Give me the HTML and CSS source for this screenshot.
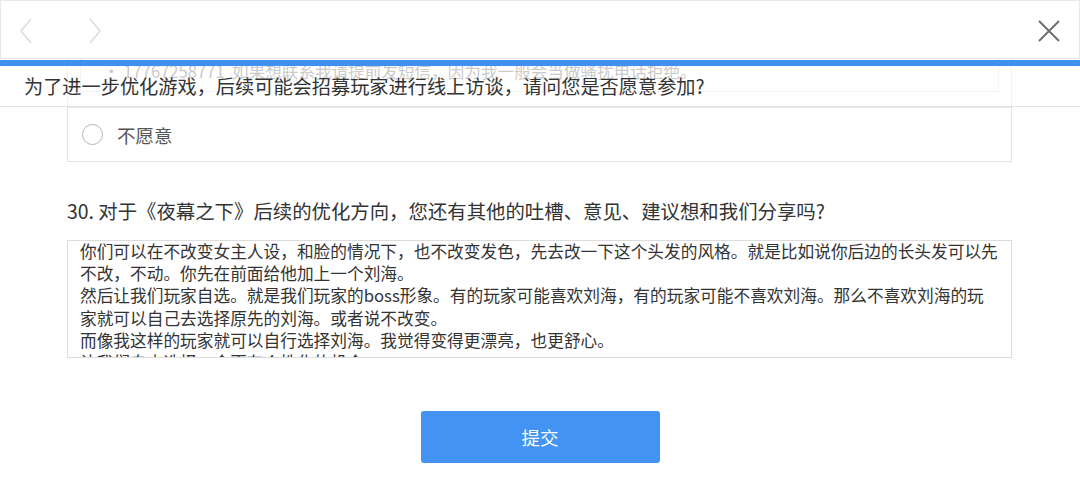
FILE: index.html
```html
<!DOCTYPE html>
<html lang="zh-CN">
<head>
<meta charset="utf-8">
<title>问卷</title>
<link rel="stylesheet" href="styles.css">
</head>
<body>
<main class="page">
  <section class="q-box">
    <div class="fill-area">
      <div class="fill-input">• 17767258771&nbsp;&nbsp;如果想联系我请提前发短信，因为我一般会当做骚扰电话拒绝。</div>
    </div>
    <label class="option">
      <span class="radio"></span>
      <span class="option-text">不愿意</span>
    </label>
  </section>

  <h2 class="q-title">30. 对于《夜幕之下》后续的优化方向，您还有其他的吐槽、意见、建议想和我们分享吗?</h2>
  <div class="answer">
    <div class="answer-text">
      <div class="line">你们可以在不改变女主人设，和脸的情况下，也不改变发色，先去改一下这个头发的风格。就是比如说你后边的长头发可以先</div>
      <div class="line">不改，不动。你先在前面给他加上一个刘海。</div>
      <div class="line">然后让我们玩家自选。就是我们玩家的boss形象。有的玩家可能喜欢刘海，有的玩家可能不喜欢刘海。那么不喜欢刘海的玩</div>
      <div class="line">家就可以自己去选择原先的刘海。或者说不改变。</div>
      <div class="line">而像我这样的玩家就可以自行选择刘海。我觉得变得更漂亮，也更舒心。</div>
      <div class="line">让我们自由选择，会更有个性化的机会。</div>
    </div>
  </div>
</main>
<div class="actions">
  <button class="submit" type="button">提交</button>
</div>

<header class="topbar">
  <svg class="nav-arrow back" width="16" height="28" viewBox="0 0 16 28"><path d="M13 2 L3 14 L13 26" fill="none" stroke="#dcdcdc" stroke-width="1.6"/></svg>
  <svg class="nav-arrow fwd" width="16" height="28" viewBox="0 0 16 28"><path d="M3 2 L13 14 L3 26" fill="none" stroke="#dcdcdc" stroke-width="1.6"/></svg>
  <svg class="close" width="24" height="24" viewBox="0 0 24 24"><path d="M2 2 L22 22 M22 2 L2 22" fill="none" stroke="#6a6a6a" stroke-width="1.8"/></svg>
</header>
<div class="progress"></div>
<div class="sticky-q">为了进一步优化游戏，后续可能会招募玩家进行线上访谈，请问您是否愿意参加?</div>
</body>
</html>
```

FILE: styles.css
```css
html, body {
  margin: 0;
  padding: 0;
  background: #ffffff;
}
body {
  width: 1080px;
  height: 486px;
  overflow: hidden;
  position: relative;
  font-family: "Noto Sans CJK SC", "Noto Sans", "Liberation Sans", sans-serif;
  color: #333333;
}
.page {
  padding-left: 67px;
  width: 945px;
}
.q-box {
  border: 1px solid #e3e3e3;
  border-top: none;
  box-sizing: border-box;
  width: 945px;
}
.fill-area {
  padding: 55px 12px 0 12px;
  height: 107px;
  box-sizing: border-box;
}
.fill-input {
  height: 37px;
  box-sizing: border-box;
  border: 1px solid #e3e3e3;
  padding-left: 22px;
  font-size: 16.6px;
  line-height: 30px;
  color: #7a7a7a;
  white-space: nowrap;
  overflow: hidden;
}
.option {
  display: flex;
  align-items: center;
  height: 54px;
  border-top: 1px solid #e6e6e6;
  padding-left: 14px;
  box-sizing: border-box;
}
.radio {
  width: 21px;
  height: 21px;
  border: 1.5px solid #b4b4b4;
  border-radius: 50%;
  box-sizing: border-box;
}
.option-text {
  margin-left: 14px;
  font-size: 18.5px;
  color: #555555;
  line-height: 24px;
}
.q-title {
  margin: 35px 0 0 0;
  font-size: 19.4px;
  font-weight: normal;
  line-height: 28px;
  color: #333333;
  white-space: nowrap;
}
.answer {
  margin-top: 15px;
  height: 118px;
  box-sizing: border-box;
  border: 1px solid #dcdcdc;
  padding: 0 12px;
  overflow: hidden;
}
.answer-text {
  margin-top: -1px;
}
.line {
  font-size: 16.7px;
  line-height: 22.2px;
  white-space: nowrap;
  color: #333333;
}
.actions {
  display: flex;
  justify-content: center;
  margin-top: 53px;
  width: 1080px;
}
.submit {
  width: 239px;
  height: 52px;
  border: none;
  border-radius: 3px;
  background: #4293f4;
  color: #ffffff;
  font-family: "Noto Sans CJK SC", "Noto Sans", sans-serif;
  font-size: 18.5px;
  padding: 0;
}
.topbar {
  position: absolute;
  top: 0;
  left: 0;
  width: 1080px;
  height: 59px;
  box-sizing: border-box;
  border: 1px solid #e8e8e8;
  background: #ffffff;
}
.nav-arrow {
  position: absolute;
  top: 16px;
}
.back { left: 17px; }
.fwd { left: 86px; }
.close {
  position: absolute;
  right: 18px;
  top: 18px;
}
.progress {
  position: absolute;
  top: 60px;
  left: 0;
  width: 1080px;
  height: 6px;
  background: #4090ef;
}
.sticky-q {
  position: absolute;
  top: 66px;
  left: 0;
  width: 1080px;
  height: 41px;
  box-sizing: border-box;
  padding-left: 24px;
  padding-top: 6px;
  background: rgba(255, 255, 255, 0.6);
  border-bottom: 1px solid #e2e2e2;
  font-size: 19.2px;
  line-height: 28px;
  color: #333333;
  white-space: nowrap;
}
```
